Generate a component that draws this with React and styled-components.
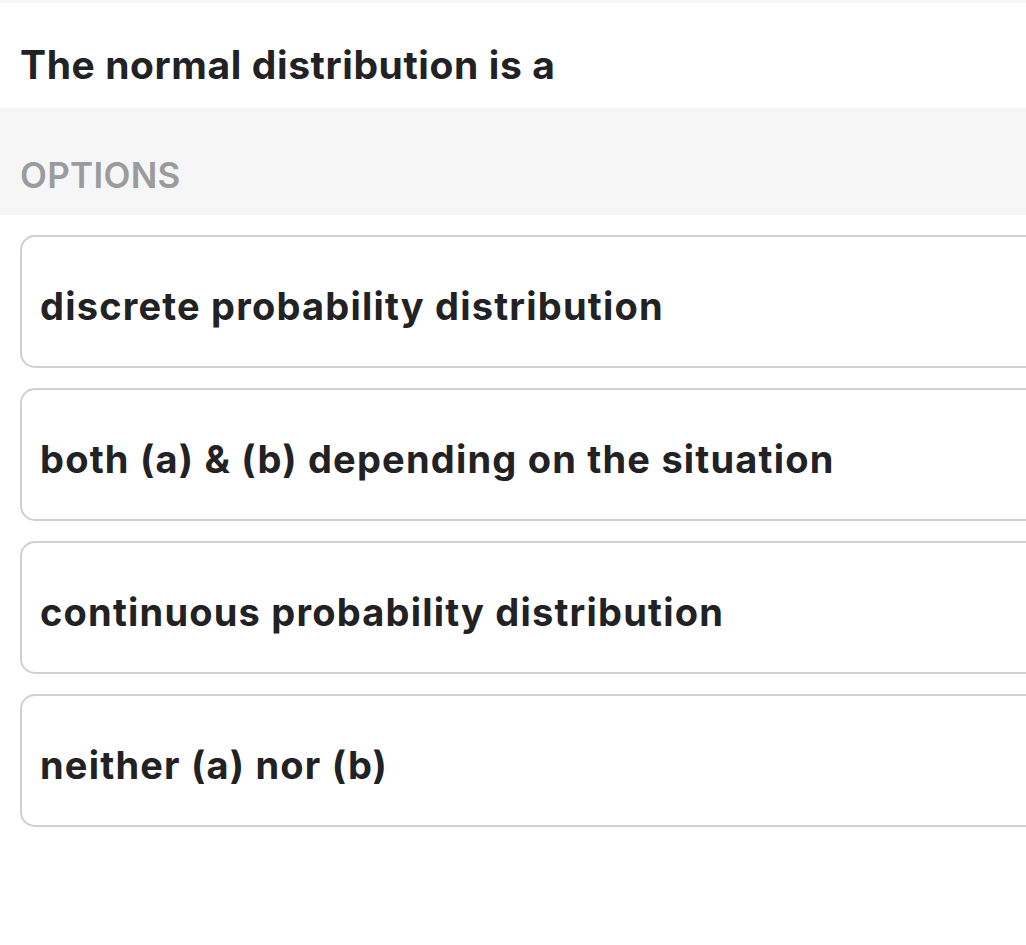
import React from "react";
import styled, { createGlobalStyle } from "styled-components";

const Global = createGlobalStyle`
  html, body { margin: 0; padding: 0; background: #ffffff; }
  body { overflow: hidden; }
`;

const Page = styled.main`
  width: 100%;
  min-height: 945px;
  overflow: hidden;
  border-top: 3px solid #f6f6f6;
  font-family: Inter, "Noto Sans", sans-serif;
  color: #222224;
`;

const Question = styled.h1`
  margin: 0;
  height: 105px;
  display: flex;
  align-items: center;
  padding: 18px 20px 0;
  font-size: 39px;
  font-weight: 700;
  letter-spacing: 0.6px;
  box-sizing: border-box;
`;

const SectionHeader = styled.div`
  height: 107px;
  display: flex;
  align-items: center;
  padding: 26px 20px 0;
  box-sizing: border-box;
  background: #f6f6f6;
  color: #9b9b9d;
  font-size: 35px;
  font-weight: 600;
  letter-spacing: 0.3px;
`;

const OptionList = styled.ul`
  list-style: none;
  margin: 0;
  padding: 20px 0 0 20px;
  display: flex;
  flex-direction: column;
  gap: 20px;
`;

const OptionCard = styled.li`
  width: 1040px;
  height: 133px;
  box-sizing: border-box;
  border: 2px solid #d0d0d0;
  border-radius: 15px;
  display: flex;
  align-items: center;
  padding: 8px 18px 0;
  font-size: 38px;
  font-weight: 700;
  letter-spacing: 1.2px;
  white-space: nowrap;
`;

const options = [
  "discrete probability distribution",
  "both (a) & (b) depending on the situation",
  "continuous probability distribution",
  "neither (a) nor (b)",
];

export default function App() {
  return (
    <>
      <Global />
      <Page>
        <Question>The normal distribution is a</Question>
        <SectionHeader>OPTIONS</SectionHeader>
        <OptionList>
          {options.map((o) => (
            <OptionCard key={o}>{o}</OptionCard>
          ))}
        </OptionList>
      </Page>
    </>
  );
}
